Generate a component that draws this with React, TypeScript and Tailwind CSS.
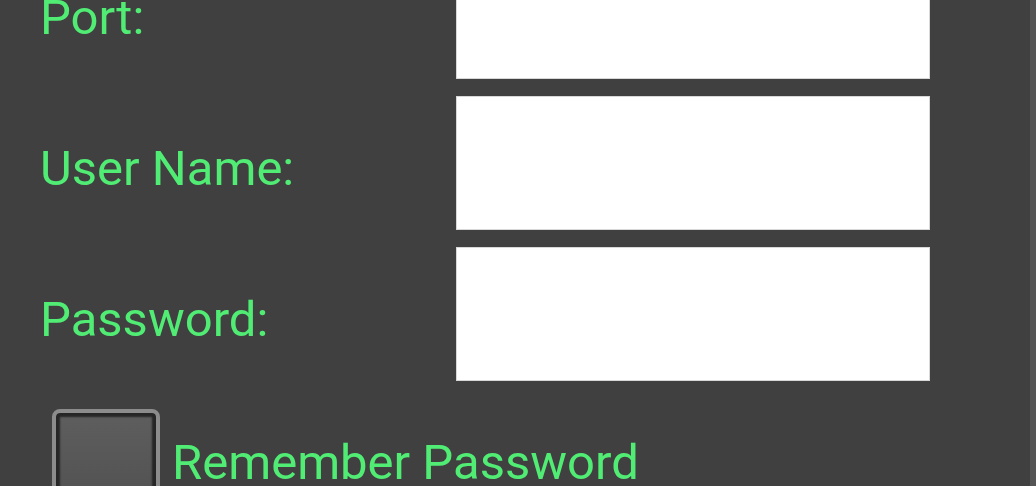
export default function App() {
  const label = "w-[416px] shrink-0 pt-3 text-[49px] leading-[56px]";
  const field = "h-[134px] w-[474px] border border-[#d8d8d8] bg-white px-4 text-[49px] text-black outline-none";
  return (
    <main className="h-screen overflow-hidden border-r-[6px] border-[#555555] bg-[#404040] font-['Roboto',sans-serif] text-[#50ec74]">
      <form className="-mt-[55px] pl-10">
        <div className="flex flex-col gap-[17px]">
          <div className="flex items-center">
            <label htmlFor="port" className={label}>Port:</label>
            <input id="port" type="text" className={field} />
          </div>
          <div className="flex items-center">
            <label htmlFor="user" className={label}>User Name:</label>
            <input id="user" type="text" className={field} />
          </div>
          <div className="flex items-center">
            <label htmlFor="password" className={label}>Password:</label>
            <input id="password" type="password" className={field} />
          </div>
        </div>
        <div className="mt-7 ml-3 flex items-center gap-3">
          <input id="remember" type="checkbox" className="size-[108px] appearance-none rounded-lg border-4 border-[#8c8c8c] bg-linear-to-b from-[#5e5e5e] to-[#505050] shadow-[inset_0_0_2px_4px_#262626]" />
          <label htmlFor="remember" className="text-[49px] leading-[56px]">Remember Password</label>
        </div>
      </form>
    </main>
  );
}
